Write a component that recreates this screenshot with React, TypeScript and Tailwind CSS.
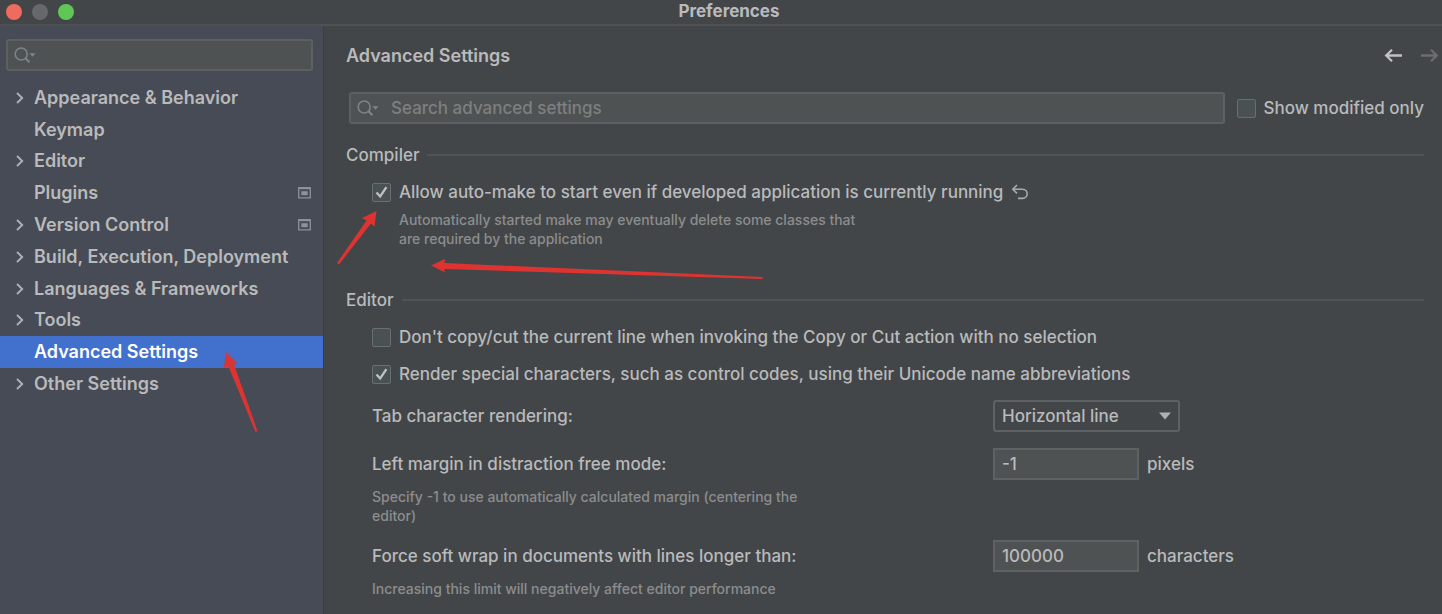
import { useState, type ReactNode } from "react";

type NavItem = { label: string; expandable?: boolean; projectLevel?: boolean };

const NAV: NavItem[] = [
  { label: "Appearance & Behavior", expandable: true },
  { label: "Keymap" },
  { label: "Editor", expandable: true },
  { label: "Plugins", projectLevel: true },
  { label: "Version Control", expandable: true, projectLevel: true },
  { label: "Build, Execution, Deployment", expandable: true },
  { label: "Languages & Frameworks", expandable: true },
  { label: "Tools", expandable: true },
  { label: "Advanced Settings" },
  { label: "Other Settings", expandable: true },
];

function SearchIcon() {
  return (
    <svg width="22" height="18" viewBox="0 0 22 18" fill="none" aria-hidden="true">
      <circle cx="7.2" cy="8" r="6" stroke="#7c848c" strokeWidth="1.6" />
      <path d="M11.5 12.3l4 3.9" stroke="#7c848c" strokeWidth="2.1" />
      <path d="M15.4 7.2h6.2l-3.1 3.5z" fill="#7c848c" />
    </svg>
  );
}

function SearchField({ label, placeholder, className }: { label: string; placeholder?: string; className: string }) {
  return (
    <div className={`flex h-8 items-center rounded-[3px] border-2 border-[#5d6061] bg-[#4e5252] pl-1.5 ${className}`}>
      <SearchIcon />
      <input
        type="text"
        aria-label={label}
        placeholder={placeholder}
        className="h-full min-w-0 flex-1 bg-transparent pl-3 text-[#c4c5c6] outline-none placeholder:text-[#7d7f80]"
      />
    </div>
  );
}

function CheckBox({ label, defaultChecked = false }: { label: string; defaultChecked?: boolean }) {
  return (
    <label className="flex items-center gap-2 whitespace-nowrap">
      <span className="grid">
        <input
          type="checkbox"
          defaultChecked={defaultChecked}
          className="peer col-start-1 row-start-1 size-[19px] appearance-none rounded-[2px] border border-[#6a6e6f] bg-[#4a5152]"
        />
        <svg
          className="pointer-events-none invisible col-start-1 row-start-1 peer-checked:visible"
          width="19"
          height="19"
          viewBox="0 0 19 19"
          fill="none"
          aria-hidden="true"
        >
          <path d="M4.5 9.4l3.7 4.1 6.2-9.3" stroke="#bfc1c2" strokeWidth="2.3" />
        </svg>
      </span>
      {label}
    </label>
  );
}

function SectionTitle({ children }: { children: ReactNode }) {
  return (
    <div className="flex h-9 items-center gap-2">
      <h2>{children}</h2>
      <div className="h-0.5 flex-1 bg-[#505354]" />
    </div>
  );
}

function Hint({ id, children, className = "" }: { id?: string; children: ReactNode; className?: string }) {
  return (
    <p id={id} className={`max-w-[470px] text-sm leading-[19px] text-[#8b8d8e] ${className}`}>
      {children}
    </p>
  );
}

function NumberRow({ id, label, value, unit, hint, className }: { id: string; label: string; value: string; unit: string; hint: ReactNode; className: string }) {
  return (
    <div className={className}>
      <div className="grid grid-cols-[621px_1fr] items-center">
        <label htmlFor={id}>{label}</label>
        <div className="flex items-center gap-2">
          <input
            id={id}
            type="text"
            defaultValue={value}
            aria-describedby={`${id}-hint`}
            className="h-8 w-[146px] border-2 border-[#5f6263] bg-[#4e5252] px-[7px] outline-none"
          />
          <span>{unit}</span>
        </div>
      </div>
      <Hint id={`${id}-hint`} className="mt-[7px]">
        {hint}
      </Hint>
    </div>
  );
}

function Sidebar() {
  const [selected, setSelected] = useState("Advanced Settings");
  return (
    <aside className="w-[324px] shrink-0 border-r border-[#3b3e3f] bg-[#474b55] pt-[13px]">
      <SearchField label="Search settings" className="mr-2.5 ml-1.5" />
      <nav aria-label="Settings" className="mt-[11px]">
        <ul className="grid h-[318px] auto-rows-fr text-lg font-semibold">
          {NAV.map((item) => (
            <li key={item.label} className="flex">
              <button
                type="button"
                aria-current={item.label === selected ? "page" : undefined}
                onClick={() => setSelected(item.label)}
                className={`flex w-full items-center pr-3 pl-3.5 text-left whitespace-nowrap ${
                  item.label === selected ? "bg-[#4170cd] text-white" : ""
                }`}
              >
                <span className="w-5">
                  {item.expandable && (
                    <svg width="12" height="14" viewBox="0 0 12 14" fill="none" aria-hidden="true">
                      <path d="M3 2l5.2 5L3 12" stroke="#adb0b4" strokeWidth="1.9" />
                    </svg>
                  )}
                </span>
                <span className="flex-1">{item.label}</span>
                {item.projectLevel && (
                  <svg width="13" height="12" viewBox="0 0 13 12" fill="none" aria-hidden="true">
                    <path d="M.7.7h11.6v10.1H.7z" stroke="#8b929b" strokeWidth="1.3" />
                    <path d="M.7 1.4h11.6" stroke="#8b929b" strokeWidth="1.6" />
                    <path d="M3.3 4.2h6.4v4H3.3z" fill="#8b929b" />
                  </svg>
                )}
              </button>
            </li>
          ))}
        </ul>
      </nav>
    </aside>
  );
}

export default function App() {
  return (
    <div className="relative flex min-h-screen flex-col overflow-hidden bg-[#434648] font-[Inter,sans-serif] text-[17px] leading-6 font-medium text-[#b9babb]">
      <header className="grid h-[26px] grid-cols-[1fr_auto_1fr] items-center border-b-2 border-[#505152]">
        <div className="flex gap-2.5 pl-1.5">
          <button type="button" aria-label="Close" className="size-4 rounded-full bg-[#ee6b5f]" />
          <button type="button" aria-label="Minimize" className="size-4 rounded-full bg-[#66686a]" />
          <button type="button" aria-label="Zoom" className="size-4 rounded-full bg-[#60c655]" />
        </div>
        <div className="pb-0.5 pl-4 leading-5 font-bold">Preferences</div>
      </header>

      <div className="flex flex-1">
        <Sidebar />
        <main className="min-w-0 flex-1 pr-[18px] pl-[22px]">
          <div className="-mr-4 flex h-[60px] items-center justify-between">
            <h1 className="text-lg font-semibold">Advanced Settings</h1>
            <div className="flex gap-4">
              <button type="button" aria-label="Back">
                <svg width="20" height="16" viewBox="0 0 20 16" fill="none" aria-hidden="true">
                  <path d="M18 7.5H2.5M8 1.8L2.2 7.5 8 13.2" stroke="#c0c1c2" strokeWidth="2.3" />
                </svg>
              </button>
              <button type="button" aria-label="Forward" disabled>
                <svg width="20" height="16" viewBox="0 0 20 16" fill="none" aria-hidden="true">
                  <path d="M1 7.5h15.5M11 1.8l5.8 5.7-5.8 5.7" stroke="#6b6d6e" strokeWidth="2.3" />
                </svg>
              </button>
            </div>
          </div>

          <div className="mt-1.5 flex items-center gap-3 pl-[3px]">
            <SearchField label="Search advanced settings" placeholder="Search advanced settings" className="min-w-0 flex-1" />
            <CheckBox label="Show modified only" />
          </div>

          <section className="mt-[13px]">
            <SectionTitle>Compiler</SectionTitle>
            <div className="mt-px flex h-9 items-center gap-2 pl-[26px]">
              <CheckBox defaultChecked label="Allow auto-make to start even if developed application is currently running" />
              <button type="button" aria-label="Reset to default">
                <svg width="18" height="16" viewBox="0 0 18 16" fill="none" aria-hidden="true">
                  <path d="M6 1L1.8 5.2 6 9.4M2 5.2h9.6a4.6 4.6 0 0 1 0 9.2H7" stroke="#a9abac" strokeWidth="1.6" />
                </svg>
              </button>
            </div>
            <Hint className="ml-[53px]">
              Automatically started make may eventually delete some classes that
              <br />
              are required by the application
            </Hint>
          </section>

          <section className="mt-[34px]">
            <SectionTitle>Editor</SectionTitle>
            <div className="pl-[26px]">
              <div className="mt-px flex h-9 items-center">
                <CheckBox label="Don't copy/cut the current line when invoking the Copy or Cut action with no selection" />
              </div>
              <div className="mt-px flex h-9 items-center">
                <CheckBox defaultChecked label="Render special characters, such as control codes, using their Unicode name abbreviations" />
              </div>
              <div className="mt-2 grid grid-cols-[621px_1fr] items-center">
                <label htmlFor="tab-rendering">Tab character rendering:</label>
                <div className="grid w-[187px] items-center">
                  <select
                    id="tab-rendering"
                    className="col-start-1 row-start-1 h-8 w-full appearance-none rounded-[3px] border-2 border-[#5f6263] bg-[#434648] px-[7px] outline-none"
                  >
                    <option>Horizontal line</option>
                    <option>Arrow</option>
                  </select>
                  <svg
                    className="pointer-events-none col-start-1 row-start-1 mr-2 justify-self-end"
                    width="14"
                    height="8"
                    viewBox="0 0 14 8"
                    aria-hidden="true"
                  >
                    <path d="M1 .5h12L7 7.5z" fill="#adafb0" />
                  </svg>
                </div>
              </div>
              <NumberRow
                id="left-margin"
                label="Left margin in distraction free mode:"
                value="-1"
                unit="pixels"
                className="mt-4"
                hint={
                  <>
                    Specify -1 to use automatically calculated margin (centering the
                    <br />
                    editor)
                  </>
                }
              />
              <NumberRow
                id="soft-wrap"
                label="Force soft wrap in documents with lines longer than:"
                value="100000"
                unit="characters"
                className="mt-[15px]"
                hint="Increasing this limit will negatively affect editor performance"
              />
            </div>
          </section>
        </main>
      </div>

      <svg className="pointer-events-none absolute top-0 left-0" width="800" height="450" viewBox="0 0 800 450" fill="#dd3431" aria-hidden="true">
        <path d="M376.5 211L374.5 226.5 371 223.5 339 264.5 337 263 366.5 220.5 362 218z" />
        <path d="M431 265.5L445 259 444.5 263 762.5 277 762.5 279 444 269 445 272.5z" />
        <path d="M226 352L237.5 363.5 234 364.5 257.5 431 255.5 432 228.5 366.5 224 367.5z" />
      </svg>
    </div>
  );
}
